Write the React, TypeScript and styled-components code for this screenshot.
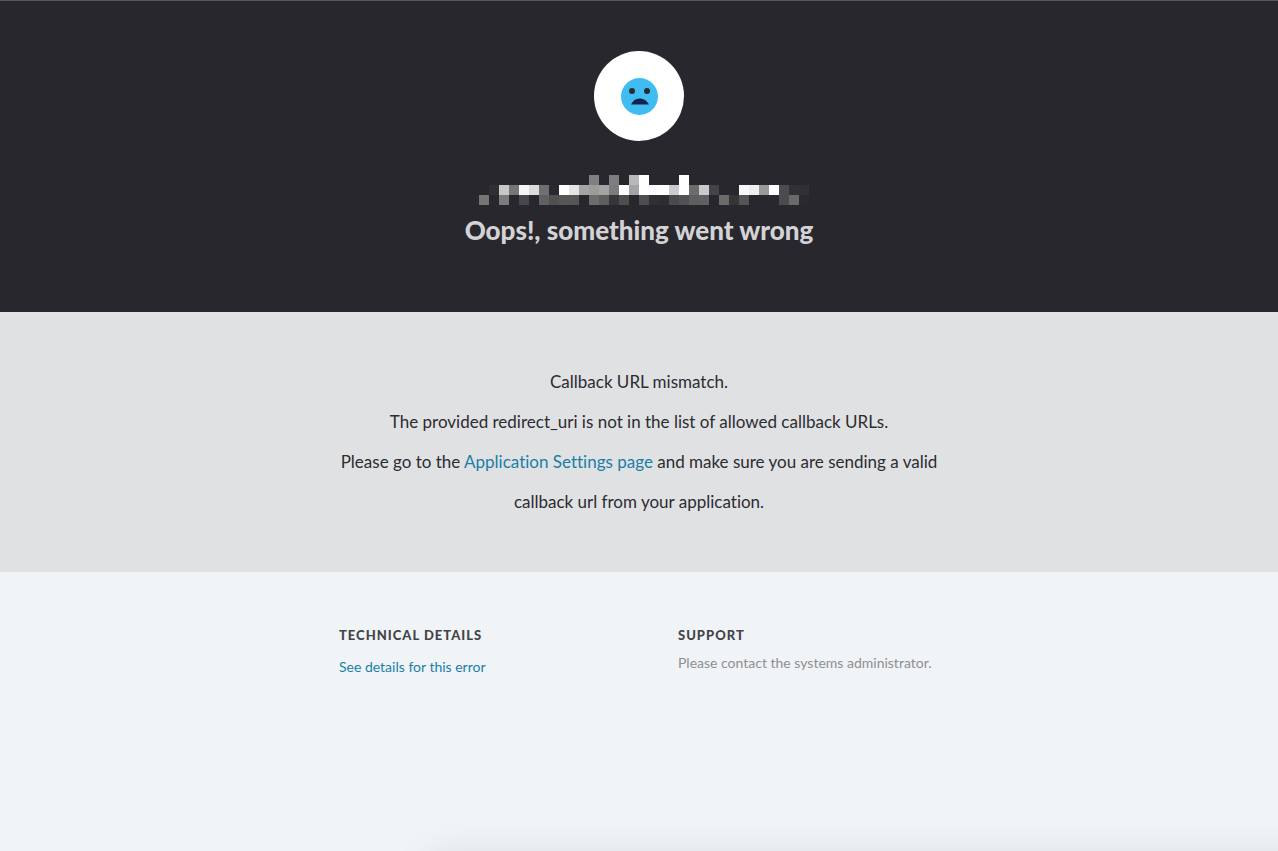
import React from "react";
import styled, { createGlobalStyle } from "styled-components";

const GlobalStyle = createGlobalStyle`
  *, *::before, *::after { box-sizing: border-box; }
  body {
    margin: 0;
    background: #f0f4f7;
    color: #2c2c31;
    font-family: Avenir, Lato, sans-serif;
    font-size: 17px;
    font-weight: 400;
    font-variant-ligatures: none;
  }
`;

const Page = styled.div`
  min-height: 100vh;
  overflow: hidden;
`;

const Header = styled.header`
  display: flex;
  flex-direction: column;
  align-items: center;
  padding: 50px 20px 62px;
  border-top: 1px solid #55555a;
  background: #28272d;
`;

const Avatar = styled.div`
  display: flex;
  align-items: center;
  justify-content: center;
  width: 90px;
  height: 90px;
  border-radius: 50%;
  background: #fff;
`;

const RedactedName = styled.svg`
  display: block;
  width: 340px;
  height: 30px;
  margin-top: 34px;
`;

const Title = styled.h1`
  margin: 5px 0 0;
  color: #d3d3d5;
  font-size: 26px;
  font-weight: 900;
  line-height: 40px;
  text-align: center;
`;

const Message = styled.main`
  padding: 50px 20px;
  background: linear-gradient(#e5e2e7, #e0e1e3 8px);
`;

const Paragraph = styled.p`
  max-width: 620px;
  margin: 0 auto;
  line-height: 40px;
  text-align: center;
`;

const TextLink = styled.a`
  color: #1a7fa8;
  text-decoration: none;
`;

const Details = styled.footer`
  display: grid;
  grid-template-columns: 339px 1fr;
  max-width: 600px;
  margin: 0 auto;
  padding: 53px 0;
`;

const DetailHeading = styled.h2`
  margin: 0;
  color: #444447;
  font-size: 13px;
  font-weight: 900;
  line-height: 20px;
  letter-spacing: 1px;
  text-transform: uppercase;
`;

const DetailText = styled.p<{ $gap: number }>`
  margin: ${({ $gap }) => $gap}px 0 0;
  color: #8e8f92;
  font-size: 14px;
  line-height: 20px;
  white-space: nowrap;
`;

const SheetShadow = styled.div`
  position: fixed;
  top: 100%;
  left: 430px;
  right: -60px;
  height: 60px;
  box-shadow: 0 4px 40px rgba(0, 0, 0, 0.09);
`;

const blank = "";
const mosaic: string[][] = [
  [
    ...Array(12).fill(blank), "#808080", blank, "#7e7e7f", blank, "#b8b8b8", "#fff",
    blank, blank, blank, "#fff",
  ],
  [
    blank, blank, "#302f34", "#c8c8c8", "#767677", "#f6f6f6", "#dcdcdc", "#6f6f71", "#2a292e",
    "#fff", "#e4e4e4", "#a4a4a4", "#9c9c9c", "#a4a4a4", "#7b7b7c", "#fff", "#a4a4a6",
    "#fff", "#fdfdfd", "#fff", "#cccccc", "#fff", "#6c6c6e", "#cacaca", "#444348",
    blank, blank, "#f8f8f8", "#eeeeee", "#999999", "#fff", "#4c4b50", "#323136", "#302f34",
  ],
  [
    blank, "#757575", blank, "#7b7b7b", blank, "#48474b", blank, "#606060", "#505051",
    "#565656", "#555555", blank, "#6c6c6c", "#5e5e5e", "#363539", "#4e4e4f", blank,
    "#4e4e50", "#302f34", "#2d2c31", "#4a4a4c", "#525254", "#5e5e60", "#606062", blank,
    "#6b6b6b", "#353437", "#555556", blank, blank, "#29282d", "#4b4a4e", "#6a6a6b", "#2a292e",
  ],
];

const SadFace = () => (
  <svg width="38" height="38" viewBox="0 0 38 38" aria-hidden="true">
    <circle cx="19.5" cy="19.5" r="18.5" fill="#40bdf0" />
    <circle cx="12" cy="14" r="3" fill="#2b2a2f" />
    <circle cx="27" cy="14" r="3" fill="#2b2a2f" />
    <path d="M11 27.6C12.8 23.6 15.8 21.6 19.5 21.6S27 23.6 28.8 27.6Z" fill="#17214a" />
  </svg>
);

export default function App() {
  return (
    <>
      <GlobalStyle />
      <Page>
        <Header>
          <Avatar>
            <SadFace />
          </Avatar>
          <RedactedName viewBox="0 0 34 3" shapeRendering="crispEdges" aria-hidden="true">
            {mosaic.map((row, y) =>
              row.map((fill, x) =>
                fill ? <rect key={`${x}-${y}`} x={x} y={y} width="1" height="1" fill={fill} /> : null
              )
            )}
          </RedactedName>
          <Title>Oops!, something went wrong</Title>
        </Header>
        <Message>
          <Paragraph>Callback URL mismatch.</Paragraph>
          <Paragraph>The provided redirect_uri is not in the list of allowed callback URLs.</Paragraph>
          <Paragraph>
            Please go to the <TextLink href="#settings">Application Settings page</TextLink> and make
            sure you are sending a valid callback url from your application.
          </Paragraph>
        </Message>
        <Details>
          <section>
            <DetailHeading>Technical details</DetailHeading>
            <DetailText $gap={12}>
              <TextLink href="#details">See details for this error</TextLink>
            </DetailText>
          </section>
          <section>
            <DetailHeading>Support</DetailHeading>
            <DetailText $gap={8}>Please contact the systems administrator.</DetailText>
          </section>
        </Details>
        <SheetShadow />
      </Page>
    </>
  );
}
